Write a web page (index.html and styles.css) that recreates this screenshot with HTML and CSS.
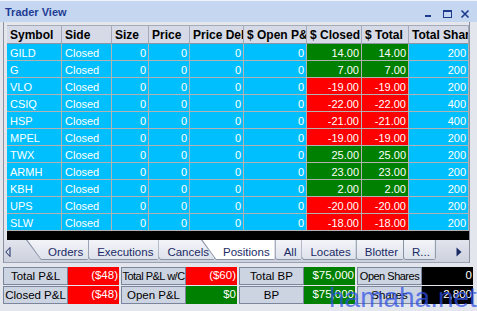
FILE: index.html
```html
<!DOCTYPE html>
<html lang="en">

<head>
  <meta charset="UTF-8">
  <title>Trader View</title>
  <link rel="stylesheet" href="styles.css">
</head>

<body>
  <div class="window">
    <div class="titlebar">
      <span class="title">Trader View</span>
      <svg class="controls" width="52" height="22" viewBox="0 0 52 22">
        <rect x="5" y="14" width="6" height="2" fill="#1d3a8c" />
        <rect x="23.5" y="9.5" width="8" height="7" fill="none" stroke="#1d3a8c" />
        <rect x="23" y="9" width="9" height="2" fill="#1d3a8c" />
        <path d="M41.5 9.5 L48.5 16.5 M48.5 9.5 L41.5 16.5" stroke="#1d3a8c" stroke-width="1.6" />
      </svg>
    </div>

    <div class="pane">
      <div class="grid">
        <div class="row head">
          <div class="cell">Symbol</div>
          <div class="cell">Side</div>
          <div class="cell">Size</div>
          <div class="cell">Price</div>
          <div class="cell">Price Delta</div>
          <div class="cell">$ Open P&amp;L</div>
          <div class="cell">$ Closed P&amp;L</div>
          <div class="cell">$ Total</div>
          <div class="cell">Total Shares</div>
        </div>
        <div class="row"><div class="cell">GILD</div><div class="cell">Closed</div><div class="cell num">0</div><div class="cell num">0</div><div class="cell num">0</div><div class="cell num">0</div><div class="cell num up">14.00</div><div class="cell num up">14.00</div><div class="cell num">200</div></div>
        <div class="row"><div class="cell">G</div><div class="cell">Closed</div><div class="cell num">0</div><div class="cell num">0</div><div class="cell num">0</div><div class="cell num">0</div><div class="cell num up">7.00</div><div class="cell num up">7.00</div><div class="cell num">200</div></div>
        <div class="row"><div class="cell">VLO</div><div class="cell">Closed</div><div class="cell num">0</div><div class="cell num">0</div><div class="cell num">0</div><div class="cell num">0</div><div class="cell num down">-19.00</div><div class="cell num down">-19.00</div><div class="cell num">200</div></div>
        <div class="row"><div class="cell">CSIQ</div><div class="cell">Closed</div><div class="cell num">0</div><div class="cell num">0</div><div class="cell num">0</div><div class="cell num">0</div><div class="cell num down">-22.00</div><div class="cell num down">-22.00</div><div class="cell num">400</div></div>
        <div class="row"><div class="cell">HSP</div><div class="cell">Closed</div><div class="cell num">0</div><div class="cell num">0</div><div class="cell num">0</div><div class="cell num">0</div><div class="cell num down">-21.00</div><div class="cell num down">-21.00</div><div class="cell num">400</div></div>
        <div class="row"><div class="cell">MPEL</div><div class="cell">Closed</div><div class="cell num">0</div><div class="cell num">0</div><div class="cell num">0</div><div class="cell num">0</div><div class="cell num down">-19.00</div><div class="cell num down">-19.00</div><div class="cell num">200</div></div>
        <div class="row"><div class="cell">TWX</div><div class="cell">Closed</div><div class="cell num">0</div><div class="cell num">0</div><div class="cell num">0</div><div class="cell num">0</div><div class="cell num up">25.00</div><div class="cell num up">25.00</div><div class="cell num">200</div></div>
        <div class="row"><div class="cell">ARMH</div><div class="cell">Closed</div><div class="cell num">0</div><div class="cell num">0</div><div class="cell num">0</div><div class="cell num">0</div><div class="cell num up">23.00</div><div class="cell num up">23.00</div><div class="cell num">200</div></div>
        <div class="row"><div class="cell">KBH</div><div class="cell">Closed</div><div class="cell num">0</div><div class="cell num">0</div><div class="cell num">0</div><div class="cell num">0</div><div class="cell num up">2.00</div><div class="cell num up">2.00</div><div class="cell num">200</div></div>
        <div class="row"><div class="cell">UPS</div><div class="cell">Closed</div><div class="cell num">0</div><div class="cell num">0</div><div class="cell num">0</div><div class="cell num">0</div><div class="cell num down">-20.00</div><div class="cell num down">-20.00</div><div class="cell num">200</div></div>
        <div class="row"><div class="cell">SLW</div><div class="cell">Closed</div><div class="cell num">0</div><div class="cell num">0</div><div class="cell num">0</div><div class="cell num">0</div><div class="cell num down">-18.00</div><div class="cell num down">-18.00</div><div class="cell num">200</div></div>
      </div>

      <div class="tabstrip">
        <div class="tab-arrow">
          <svg width="6" height="10" viewBox="0 0 6 10"><path d="M5 0.5 L0.8 5 L5 9.5 Z" fill="none" stroke="#1b2a66" /></svg>
        </div>
        <div class="tabs">
          <div class="tab">Orders</div>
          <div class="tab">Executions</div>
          <div class="tab">Cancels</div>
          <div class="tab active">Positions</div>
          <div class="tab">All</div>
          <div class="tab">Locates</div>
          <div class="tab">Blotter</div>
          <div class="tab">R...</div>
        </div>
        <div class="tab-arrow right">
          <svg width="6" height="10" viewBox="0 0 6 10"><path d="M0.5 0.5 L5.5 5 L0.5 9.5 Z" fill="#1b2a66" /></svg>
        </div>
      </div>
    </div>

    <div class="summary">
      <div class="stat"><div class="label">Total P&amp;L</div><div class="value loss">($48)</div></div>
      <div class="stat"><div class="label narrow">Total P&amp;L w/C</div><div class="value loss">($60)</div></div>
      <div class="stat"><div class="label">Total BP</div><div class="value gain">$75,000</div></div>
      <div class="stat"><div class="label narrow">Open Shares</div><div class="value flat">0</div></div>
      <div class="stat"><div class="label">Closed P&amp;L</div><div class="value loss">($48)</div></div>
      <div class="stat"><div class="label">Open P&amp;L</div><div class="value gain">$0</div></div>
      <div class="stat"><div class="label">BP</div><div class="value gain">$75,000</div></div>
      <div class="stat"><div class="label">Shares</div><div class="value flat">2,800</div></div>
    </div>

    <div class="watermark">hamaha.net</div>
  </div>
</body>

</html>
```

FILE: styles.css
```css
body {
  margin: 0;
  background: #d9dde6;
  font-family: "Liberation Sans", Arial, sans-serif;
}

.window {
  position: relative;
  width: 477px;
  height: 311px;
  overflow: hidden;
  background: #e3e6ed;
}

.titlebar {
  display: flex;
  align-items: center;
  height: 22px;
  box-sizing: border-box;
  padding-left: 5px;
  border-top: 1px solid #eef3fc;
  background: #c5d6f1;
}

.title {
  font-size: 11px;
  font-weight: bold;
  color: #1f3d94;
}

.controls {
  margin-left: auto;
  margin-right: 5px;
}

.pane {
  width: 467px;
  box-sizing: border-box;
  margin-left: 3px;
  padding-top: 3px;
  border-left: 1px solid #8c91a0;
  border-right: 1px solid #8c91a0;
  background: #e4e6ec;
}

.grid {
  height: 215px;
  margin-left: 3px;
  overflow: hidden;
  background: #000;
}

.row {
  display: grid;
  grid-template-columns: 55px 50px 37px 41px 54px 63px 55px 47px 60px;
  height: 17px;
}

.cell {
  box-sizing: border-box;
  padding: 3px 2px 0 3px;
  line-height: 13px;
  font-size: 11px;
  color: #fff;
  white-space: nowrap;
  overflow: hidden;
  background: #00bfff;
  border-right: 1px solid #b2b2b2;
  border-bottom: 1px solid #b2b2b2;
}

.num {
  text-align: right;
}

.up {
  background: #008000;
}

.down {
  background: #ff0000;
}

.head {
  height: 19px;
}

.head .cell {
  padding: 2px 2px 0 3px;
  line-height: 15px;
  font-size: 12px;
  font-weight: bold;
  color: #000;
  background: #d5dae6;
  border-top: 1px solid #a3aab9;
  border-right: 1px solid #a3aab9;
  border-bottom: 1px solid #8e95a5;
}

.tabstrip {
  display: flex;
  align-items: flex-start;
  height: 23px;
  box-sizing: border-box;
  border-bottom: 1px solid #9aa2b4;
  background: linear-gradient(#e1e4ed, #cdd1dd);
}

.tab-arrow {
  display: flex;
  align-items: center;
  width: 19px;
  height: 20px;
  padding: 2px 0 0 1px;
}

.tab-arrow.right {
  width: auto;
  margin-left: auto;
  padding: 2px 7px 0 0;
}

.tabs {
  display: flex;
}

.tab {
  position: relative;
  height: 20px;
  box-sizing: border-box;
  padding: 4px 6px 0 22px;
  margin-left: -14px;
  line-height: 16px;
  font-size: 11.5px;
  color: #1b2a66;
}

.tab:first-child {
  margin-left: 2px;
}

.tab::before,
.tab::after {
  content: "";
  position: absolute;
  inset: 0;
  z-index: -1;
  border-bottom-right-radius: 3px;
}

.tab::before {
  background: #8a92a7;
  clip-path: polygon(0 0, 100% 0, 100% 100%, 15px 100%);
}

.tab::after {
  background: linear-gradient(#f2f4f8, #dde1ea);
  clip-path: polygon(1.5px 0, calc(100% - 1px) 0, calc(100% - 1px) calc(100% - 1px), 15.2px calc(100% - 1px));
}

.tab:nth-child(1) { z-index: 9; }
.tab:nth-child(2) { z-index: 8; }
.tab:nth-child(3) { z-index: 7; }
.tab:nth-child(4) { z-index: 6; }
.tab:nth-child(5) { z-index: 5; }
.tab:nth-child(6) { z-index: 4; }
.tab:nth-child(7) { z-index: 3; }
.tab:nth-child(8) { z-index: 2; }

.tab.active {
  z-index: 20;
}

.tab.active::after {
  background: #fff;
}

.summary {
  display: grid;
  grid-template-columns: repeat(4, 116px);
  gap: 1px 2px;
  padding: 4px 0 0 3px;
}

.stat {
  display: flex;
  height: 18px;
}

.label {
  width: 65px;
  flex: none;
  box-sizing: border-box;
  border: 1px solid #7b859b;
  background: #ccd3e1;
  text-align: center;
  font-size: 11.5px;
  line-height: 16px;
  color: #000;
  white-space: nowrap;
  overflow: hidden;
}

.label.narrow {
  font-size: 11px;
  letter-spacing: -0.5px;
}

.value {
  flex: 1;
  padding-right: 1px;
  text-align: right;
  font-size: 11.5px;
  line-height: 17px;
  color: #fff;
}

.loss {
  background: #ff0000;
}

.gain {
  background: #008000;
}

.flat {
  background: #000;
}

.watermark {
  position: absolute;
  left: 329px;
  top: 282px;
  font-size: 28px;
  color: rgba(45, 80, 230, 0.72);
  pointer-events: none;
}
```
